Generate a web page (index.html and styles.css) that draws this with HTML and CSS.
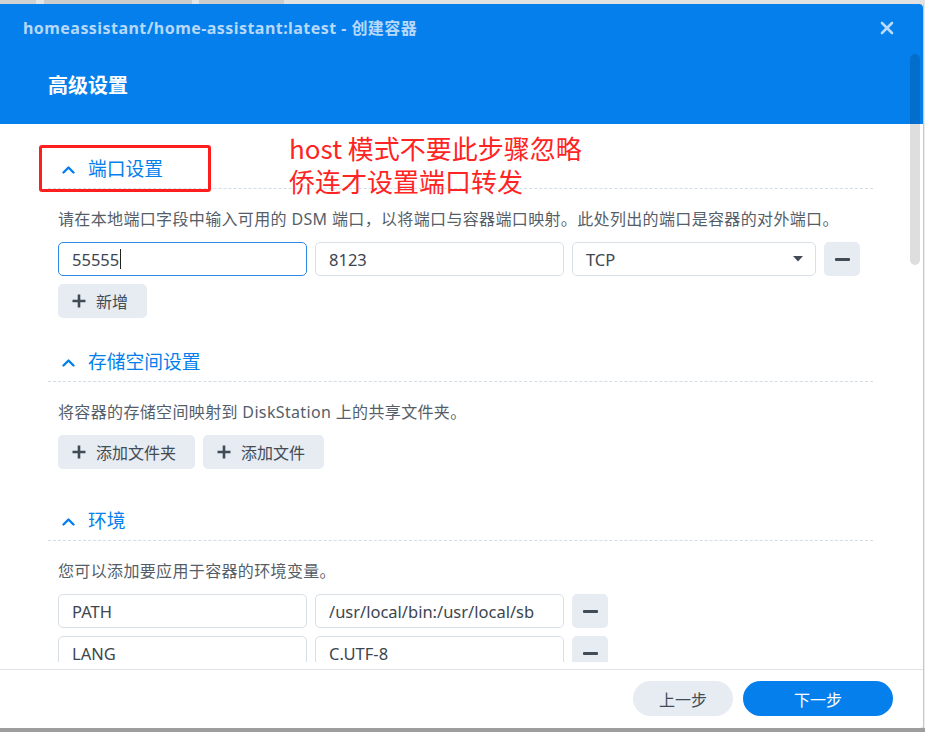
FILE: index.html
```html
<!DOCTYPE html>
<html lang="zh-CN">
<head>
<meta charset="utf-8">
<title>创建容器</title>
<link rel="stylesheet" href="styles.css">
</head>
<body class="page">
  <div class="tabs">
    <span class="tab t1"></span><span class="tab t2"></span><span class="tab t3"></span><span class="tab t4"></span><span class="tab t5"></span><span class="tab t6"></span>
  </div>
  <div class="stage">
    <div class="dialog">
      <header class="dlg-header">
        <div class="title-row">
          <span class="title">homeassistant/home-assistant:latest - 创建容器</span>
          <svg class="close" width="14" height="14" viewBox="0 0 14 14"><path d="M2 2 L12 12 M12 2 L2 12" stroke="#b9dbfb" stroke-width="2.6" stroke-linecap="round"/></svg>
        </div>
        <h1 class="heading">高级设置</h1>
      </header>

      <div class="content-wrap">
        <div class="content">
          <section class="section">
            <div class="sec-head">
              <svg class="chev" width="13" height="9" viewBox="0 0 13 9"><path d="M1.5 7.5 L6.5 2.5 L11.5 7.5" fill="none" stroke="#057feb" stroke-width="2.4" stroke-linecap="round" stroke-linejoin="round"/></svg>
              <span class="sec-title">端口设置</span>
            </div>
            <div class="sec-body">
              <p class="desc">请在本地端口字段中输入可用的 DSM 端口，以将端口与容器端口映射。此处列出的端口是容器的对外端口。</p>
              <div class="port-row">
                <div class="field focused"><span>55555</span><span class="caret"></span></div>
                <div class="field"><span>8123</span></div>
                <div class="field select"><span>TCP</span><svg width="10" height="6" viewBox="0 0 10 6"><path d="M0 0 H10 L5 5.5 Z" fill="#414b55"/></svg></div>
                <button class="icon-btn"><span class="minus"></span></button>
              </div>
              <div class="btn-row">
                <button class="btn"><svg class="plus" width="14" height="14" viewBox="0 0 14 14"><path d="M7 0.5 V13.5 M0.5 7 H13.5" stroke="#414b55" stroke-width="2.6"/></svg><span>新增</span></button>
              </div>
            </div>
          </section>

          <section class="section spaced">
            <div class="sec-head">
              <svg class="chev" width="13" height="9" viewBox="0 0 13 9"><path d="M1.5 7.5 L6.5 2.5 L11.5 7.5" fill="none" stroke="#057feb" stroke-width="2.4" stroke-linecap="round" stroke-linejoin="round"/></svg>
              <span class="sec-title">存储空间设置</span>
            </div>
            <div class="sec-body">
              <p class="desc">将容器的存储空间映射到 DiskStation 上的共享文件夹。</p>
              <div class="btn-row wide">
                <button class="btn"><svg class="plus" width="14" height="14" viewBox="0 0 14 14"><path d="M7 0.5 V13.5 M0.5 7 H13.5" stroke="#414b55" stroke-width="2.6"/></svg><span>添加文件夹</span></button>
                <button class="btn"><svg class="plus" width="14" height="14" viewBox="0 0 14 14"><path d="M7 0.5 V13.5 M0.5 7 H13.5" stroke="#414b55" stroke-width="2.6"/></svg><span>添加文件</span></button>
              </div>
            </div>
          </section>

          <section class="section">
            <div class="sec-head">
              <svg class="chev" width="13" height="9" viewBox="0 0 13 9"><path d="M1.5 7.5 L6.5 2.5 L11.5 7.5" fill="none" stroke="#057feb" stroke-width="2.4" stroke-linecap="round" stroke-linejoin="round"/></svg>
              <span class="sec-title">环境</span>
            </div>
            <div class="sec-body">
              <p class="desc">您可以添加要应用于容器的环境变量。</p>
              <div class="env-list">
                <div class="env-row">
                  <div class="field"><span>PATH</span></div>
                  <div class="field"><span>/usr/local/bin:/usr/local/sb</span></div>
                  <button class="icon-btn"><span class="minus"></span></button>
                </div>
                <div class="env-row">
                  <div class="field"><span>LANG</span></div>
                  <div class="field"><span>C.UTF-8</span></div>
                  <button class="icon-btn"><span class="minus"></span></button>
                </div>
              </div>
            </div>
          </section>
        </div>
      </div>

      <footer class="dlg-footer">
        <button class="pill secondary">上一步</button>
        <button class="pill primary">下一步</button>
      </footer>

      <div class="scroll-thumb"></div>
      <div class="note-box"></div>
      <div class="note-text">host 模式不要此步骤忽略<br>侨连才设置端口转发</div>
    </div>
    <div class="side"></div>
  </div>
  <div class="bottom-strip"></div>
</body>
</html>
```

FILE: styles.css
```css
* { box-sizing: border-box; }

html, body { margin: 0; padding: 0; }

.page {
  width: 925px;
  height: 732px;
  overflow: hidden;
  background: #e6e6e6;
  font-family: "Noto Sans", "Noto Sans CJK SC", sans-serif;
  color: #414b55;
}

.tabs {
  display: flex;
  height: 4px;
  background: #e4e4e4;
}
.tab { display: block; height: 4px; }
.t1 { width: 36px; background: #d2d2d2; }
.t2 { width: 8px; background: #e6e6e6; }
.t3 { width: 148px; background: #cdcdcd; }
.t4 { width: 7px; background: #e6e6e6; }
.t5 { width: 85px; background: #cdcdcd; }
.t6 { flex: 1; background: #e2e2e2; }

.stage {
  display: flex;
  height: 724px;
}

.side {
  flex: 1;
  background: #ececec;
  border-left: 1px solid #c9c9c9;
}

.bottom-strip {
  height: 4px;
  background: #9d9d9d;
}

.dialog {
  position: relative;
  width: 923px;
  height: 724px;
  display: flex;
  flex-direction: column;
  background: #fff;
  border-radius: 0 4px 4px 0;
  overflow: hidden;
}

/* header */
.dlg-header {
  height: 120px;
  flex: none;
  background: #057feb;
  padding: 14px 29px 0 23px;
}
.title-row {
  display: flex;
  align-items: center;
  justify-content: space-between;
  height: 20px;
}
.title {
  font-size: 16px;
  font-weight: 700;
  color: #b6d8fa;
  line-height: 20px;
  letter-spacing: 0.45px;
}
.heading {
  margin: 34px 0 0 25px;
  font-size: 20px;
  line-height: 28px;
  font-weight: 700;
  color: #fff;
}

/* content */
.content-wrap {
  flex: 1;
  display: flex;
  padding-bottom: 7px;
  min-height: 0;
}
.content {
  flex: 1;
  overflow: hidden;
  padding: 26px 50px 0 48px;
}

.section + .section { margin-top: 25px; }
.section.spaced { padding-bottom: 8px; }

.sec-head {
  display: flex;
  align-items: center;
  height: 39px;
  padding-left: 14px;
  border-bottom: 1px dashed #d3dde7;
}
.chev { margin-right: 13px; flex: none; }
.sec-title {
  font-size: 18.75px;
  line-height: 26px;
  color: #057feb;
}

.sec-body { padding-left: 10px; }

.desc {
  margin: 20px 0 0;
  font-size: 16px;
  line-height: 20px;
  letter-spacing: 0.35px;
  color: #545e69;
}

.port-row {
  margin-top: 13px;
  display: grid;
  grid-template-columns: 249px 249px 244px 36px;
  gap: 8px;
  height: 34px;
}

.field {
  display: flex;
  align-items: center;
  height: 34px;
  padding: 0 13px;
  border: 1px solid #d8dfe7;
  border-radius: 5px;
  font-size: 16.5px;
  color: #3d4650;
  white-space: nowrap;
  overflow: hidden;
}
.field.focused { border-color: #2a8ae6; }
.caret {
  display: inline-block;
  width: 1px;
  height: 20px;
  background: #222;
  margin-left: 1px;
}
.field.select { justify-content: space-between; padding-right: 12px; }

.icon-btn {
  width: 36px;
  height: 34px;
  border: 0;
  padding: 0;
  border-radius: 5px;
  background: #e7ebf2;
  display: flex;
  align-items: center;
  justify-content: center;
}
.minus {
  display: block;
  width: 15px;
  height: 3px;
  background: #414b55;
  border-radius: 1px;
}

.btn-row {
  display: flex;
  gap: 8px;
  margin-top: 8px;
}
.btn-row.wide { margin-top: 13px; }

.btn {
  display: flex;
  align-items: center;
  gap: 10px;
  height: 34px;
  padding: 0 19px 0 14px;
  border: 0;
  border-radius: 5px;
  background: #e7ebf2;
  font-family: inherit;
  font-size: 16px;
  color: #414b55;
}
.plus { flex: none; }

.env-list {
  margin-top: 13px;
  display: flex;
  flex-direction: column;
  gap: 8px;
}
.env-row {
  display: grid;
  grid-template-columns: 249px 249px 36px;
  gap: 8px;
}

/* footer */
.dlg-footer {
  flex: none;
  height: 59px;
  border-top: 1px solid #dfe3e8;
  display: flex;
  justify-content: flex-end;
  align-items: flex-start;
  gap: 10px;
  padding: 11px 30px 0 0;
}
.pill {
  height: 35px;
  border: 0;
  border-radius: 18px;
  font-family: inherit;
  font-size: 16px;
}
.pill.secondary { width: 100px; background: #e7ebf2; color: #414b55; }
.pill.primary { width: 150px; background: #057feb; color: #fff; }

/* overlays */
.scroll-thumb {
  position: absolute;
  left: 910px;
  top: 50px;
  width: 10px;
  height: 211px;
  border-radius: 5px;
  background: rgba(0, 0, 0, 0.13);
}

.note-box {
  position: absolute;
  left: 39px;
  top: 141px;
  width: 172px;
  height: 47px;
  border: 3px solid #ff1e1e;
  border-radius: 3px;
}

.note-text {
  position: absolute;
  left: 289px;
  top: 127px;
  font-family: "Noto Sans CJK SC", sans-serif;
  font-size: 26px;
  line-height: 33px;
  color: #ff2424;
  white-space: nowrap;
}
```
